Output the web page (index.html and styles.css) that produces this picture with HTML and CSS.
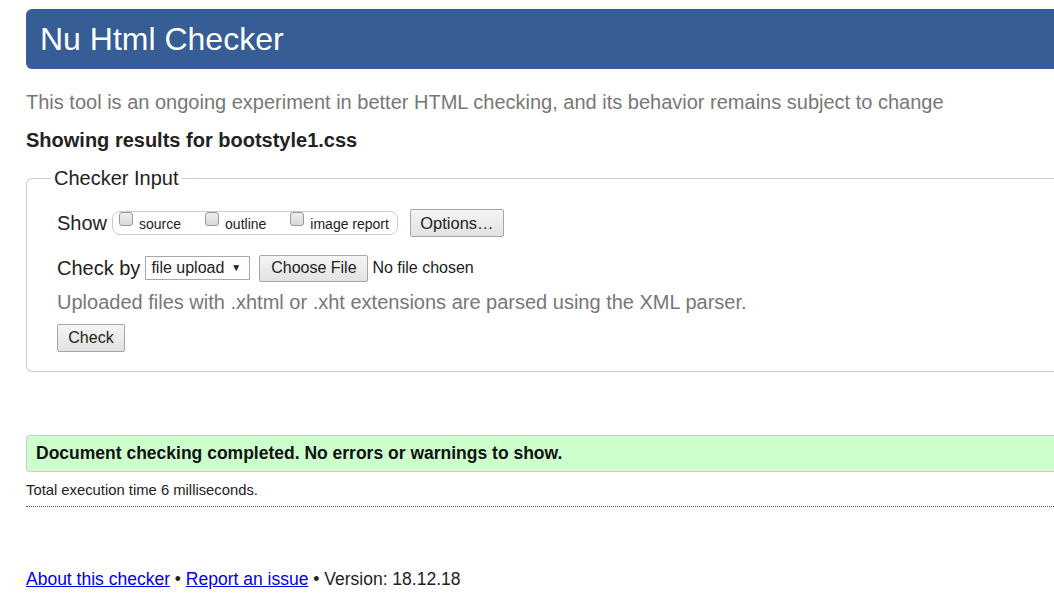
FILE: index.html
```html
<!DOCTYPE html>
<html>
<head>
<meta charset="utf-8">
<link rel="stylesheet" href="styles.css">
</head>
<body>
<div class="page">
  <h1 class="banner">Nu Html Checker</h1>
  <p class="tagline">This tool is an ongoing experiment in better HTML checking, and its behavior remains subject to change</p>
  <p class="showing">Showing results for bootstyle1.css</p>
  <fieldset class="input">
    <legend>Checker Input</legend>
    <div class="row show-row">
      <span class="label">Show</span>
      <span class="group">
        <label class="opt"><span class="box"></span>source</label>
        <label class="opt"><span class="box"></span>outline</label>
        <label class="opt"><span class="box"></span>image report</label>
      </span>
      <button class="btn btn-options">Options…</button>
    </div>
    <div class="row by-row">
      <span class="label">Check by</span>
      <span class="select">file upload <span class="caret">▼</span></span>
      <button class="btn btn-file">Choose File</button>
      <span class="nofile">No file chosen</span>
    </div>
    <p class="hint">Uploaded files with .xhtml or .xht extensions are parsed using the XML parser.</p>
    <button class="btn btn-check">Check</button>
  </fieldset>
  <div class="success">Document checking completed. No errors or warnings to show.</div>
  <p class="stats">Total execution time 6 milliseconds.</p>
  <p class="footer"><a href="#">About this checker</a> • <a href="#">Report an issue</a> • Version: 18.12.18</p>
</div>
</body>
</html>
```
FILE: styles.css
```css
html, body {
  margin: 0;
  padding: 0;
  overflow: hidden;
  background: #fff;
}
body {
  font-family: "Liberation Sans", Arial, sans-serif;
  color: #222;
}
.page {
  width: 1100px;
  padding: 9px 0 0 26px;
}
.banner {
  margin: 0;
  height: 60px;
  box-sizing: border-box;
  padding: 12px 0 0 14px;
  background: #365d95;
  color: #fff;
  font-weight: normal;
  font-size: 32px;
  line-height: 36px;
  border-radius: 6px 0 0 6px;
}
.tagline {
  margin: 20px 0 0 0;
  font-size: 20px;
  line-height: 26px;
  color: #777;
}
.showing {
  margin: 13px 0 0 0;
  font-size: 20px;
  line-height: 24px;
  font-weight: bold;
  color: #222;
}
.input {
  margin: 15px 0 0 0;
  padding: 19px 0 19px 30px;
  border: 1px solid #ccc;
  border-right: none;
  border-radius: 6px 0 0 6px;
}
.input legend {
  font-size: 20px;
  padding: 0 3px;
  margin-left: -6px;
  color: #222;
}
.row {
  display: flex;
  align-items: center;
}
.label {
  font-size: 20px;
  color: #222;
}
.show-row {
  height: 28px;
}
.group {
  display: flex;
  align-items: center;
  margin-left: 5px;
  height: 22px;
  padding: 0 8px 0 6px;
  border: 1px solid #ccc;
  border-radius: 8px;
  gap: 24px;
}
.opt {
  display: flex;
  align-items: center;
  font-size: 14px;
  color: #222;
  position: relative;
  top: 1px;
}
.box {
  width: 12px;
  height: 12px;
  border: 1px solid #999;
  border-radius: 3px;
  background: linear-gradient(#eee, #d8d8d8);
  margin-right: 6px;
  position: relative;
  top: -5px;
}
.btn {
  font-family: "Liberation Sans", Arial, sans-serif;
  color: #222;
  border: 1px solid #a6a6a6;
  background: linear-gradient(#f5f5f5, #e2e2e2);
  border-radius: 2px;
  padding: 0;
}
.btn-options {
  margin-left: 12px;
  width: 94px;
  height: 28px;
  font-size: 16.5px;
}
.by-row {
  margin-top: 17px;
  height: 28px;
}
.select {
  margin-left: 5px;
  height: 24px;
  box-sizing: border-box;
  width: 105px;
  border: 1px solid #aaa;
  padding: 0 0 0 5px;
  font-size: 16px;
  line-height: 22px;
  color: #222;
  display: flex;
  align-items: center;
}
.caret {
  font-size: 10px;
  margin-left: 7px;
}
.btn-file {
  margin-left: 9px;
  width: 109px;
  height: 27px;
  font-size: 16px;
}
.nofile {
  margin-left: 4px;
  font-size: 16px;
  color: #222;
}
.hint {
  margin: 8px 0 0 0;
  font-size: 20px;
  line-height: 24px;
  color: #777;
}
.btn-check {
  display: block;
  margin-top: 10px;
  width: 68px;
  height: 28px;
  font-size: 16px;
}
.success {
  margin-top: 63px;
  height: 37px;
  box-sizing: border-box;
  background: #ccffcc;
  border: 1px solid #ccc;
  border-right: none;
  border-radius: 4px 0 0 4px;
  padding: 7px 0 0 9px;
  font-size: 17.5px;
  font-weight: bold;
  color: #111;
}
.stats {
  margin: 9px 0 0 0;
  font-size: 14.8px;
  line-height: 18px;
  padding-bottom: 7px;
  border-bottom: 1px dotted #555;
  color: #222;
}
.footer {
  margin: 62px 0 0 0;
  font-size: 17.5px;
  color: #222;
}
.footer a {
  color: #0000ee;
}
```
